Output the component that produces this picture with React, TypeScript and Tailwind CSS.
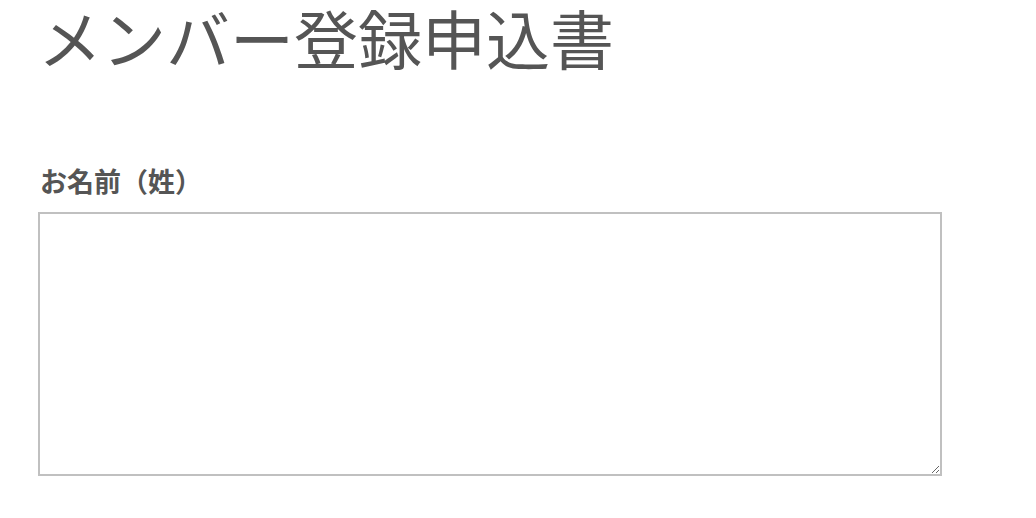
export default function App() {
  return (
    <div
      className="min-h-[518px] bg-white px-[38px] text-[#555]"
      style={{ fontFamily: '"Noto Sans CJK JP", "Noto Sans", sans-serif' }}
    >
      <h1 className="text-[64px] font-normal leading-[72px]">
        メンバー登録申込書
      </h1>
      <form className="mt-[94px]">
        <label htmlFor="sei" className="block pl-[2px] text-[27px] font-bold leading-[30px]">
          お名前（姓）
        </label>
        <textarea
          id="sei"
          className="mt-[16px] block h-[264px] w-[904px] border-2 border-[#c0c0c0] bg-white p-2 outline-none"
        />
      </form>
    </div>
  );
}
